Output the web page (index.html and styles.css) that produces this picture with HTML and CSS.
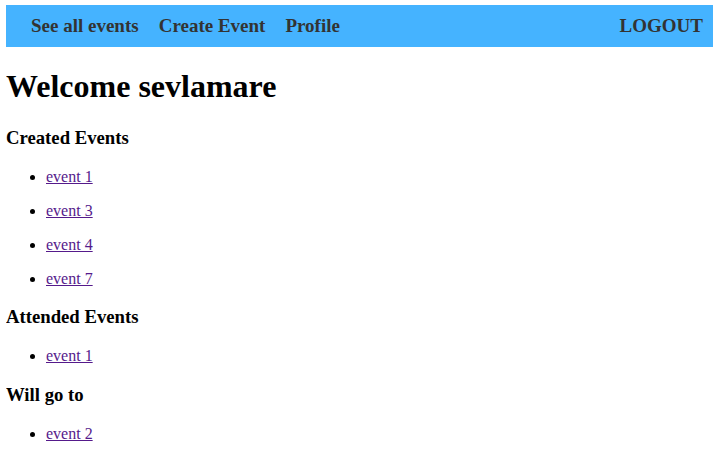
FILE: index.html
```html
<!DOCTYPE html>
<html>
<head>
<meta charset="utf-8">
<link rel="stylesheet" href="styles.css">
</head>
<body>
<nav class="navbar">
  <div class="nav-left">
    <a class="nav-link" href="#">See all events</a>
    <a class="nav-link" href="#">Create Event</a>
    <a class="nav-link" href="#">Profile</a>
  </div>
  <a class="nav-link logout" href="#">LOGOUT</a>
</nav>
<h1>Welcome sevlamare</h1>
<h3>Created Events</h3>
<ul>
  <li><p><a class="event" href="#">event 1</a></p></li>
  <li><p><a class="event" href="#">event 3</a></p></li>
  <li><p><a class="event" href="#">event 4</a></p></li>
  <li><p><a class="event" href="#">event 7</a></p></li>
</ul>
<h3>Attended Events</h3>
<ul>
  <li><p><a class="event" href="#">event 1</a></p></li>
</ul>
<h3>Will go to</h3>
<ul>
  <li><p><a class="event" href="#">event 2</a></p></li>
</ul>
</body>
</html>
```
FILE: styles.css
```css
body {
  margin: 5px 5px 8px 6px;
  font-family: "Liberation Serif", "Times New Roman", serif;
  color: #000;
  background: #fff;
}
.navbar {
  display: flex;
  align-items: center;
  justify-content: space-between;
  background: #45b3ff;
  height: 42px;
  padding: 0 10px 0 25px;
}
.nav-left {
  display: flex;
  gap: 20px;
}
.nav-link {
  color: #333;
  text-decoration: none;
  font-weight: bold;
  font-size: 19px;
}
h1 {
  font-size: 32px;
  margin: 21.44px 0 21.5px;
}
h3 {
  font-size: 18.72px;
  margin: 18.72px 0;
}
ul {
  padding-left: 40px;
  margin: 16px 0;
}
li p {
  margin: 16px 0;
}
.event {
  color: #551a8b;
}
```
